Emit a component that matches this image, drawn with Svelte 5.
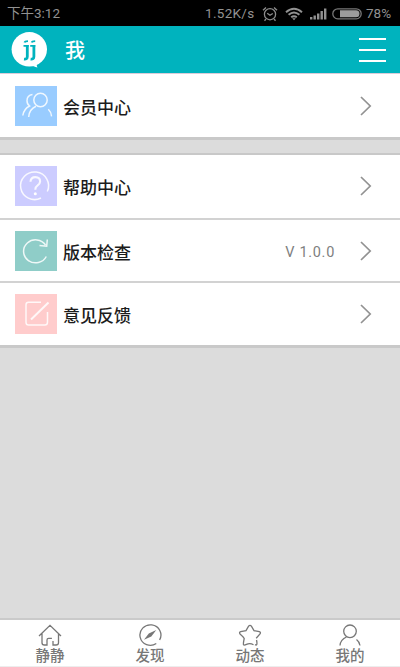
<script>
  const groups = [
    [{ icon: 'members', label: '会员中心', color: '#99ccff' }],
    [
      { icon: 'help', label: '帮助中心', color: '#ccccff' },
      { icon: 'refresh', label: '版本检查', color: '#8fcdc8', note: 'V 1.0.0' },
      { icon: 'edit', label: '意见反馈', color: '#ffcccc' }
    ]
  ];
  const tabs = [
    { icon: 'home', label: '静静' },
    { icon: 'compass', label: '发现' },
    { icon: 'star', label: '动态' },
    { icon: 'user', label: '我的' }
  ];
</script>

<div class="screen">
  <div class="status">
    <span class="time">下午3:12</span>
    <span class="speed">1.52K/s</span>
    <svg class="alarm" width="16" height="16" viewBox="0 0 16 16" fill="none" stroke="#8c8c8c" stroke-width="1.3">
      <circle cx="8" cy="8.2" r="5.6" />
      <path d="M1 4.2 4 1.4M15 4.2 12 1.4M5.2 7.2 8 9.3l2.8-1.8M4 13l-1.5 1.7M12 13l1.5 1.7" />
    </svg>
    <svg class="wifi" width="18" height="14" viewBox="0 0 18 14" fill="none" stroke="#929292" stroke-width="1.9">
      <path d="M1 5.2Q9-1.8 17 5.2M3.6 7.8Q9 3.2 14.4 7.8M6.2 10.3Q9 8 11.8 10.3" />
      <path d="M7.2 11.2h3.6L9 13.3z" fill="#929292" stroke="none" />
    </svg>
    <svg class="signal" width="17" height="12" viewBox="0 0 17 12" fill="#929292">
      <path d="M0 9h2.4v2.5H0zM3.5 7.5h2.4v4H3.5zM7 5.5h2.4v6H7zM10.5 3h2.4v8.5h-2.4zM14 .5h2.4v11H14z" />
    </svg>
    <svg class="battery" width="30" height="12" viewBox="0 0 30 12">
      <rect x=".8" y=".8" width="28.4" height="10" rx="5" fill="none" stroke="#777" stroke-width="1.3" />
      <path d="M8 2.3h16a3.5 3.5 0 0 1 0 7H8z" fill="#9c9c9c" />
    </svg>
    <span class="percent">78%</span>
  </div>

  <header>
    <svg class="logo" width="36" height="36" viewBox="0 0 36 36">
      <ellipse cx="18.3" cy="17.3" rx="17.7" ry="17.2" fill="#fff" />
      <path d="M18 33c4 .2 5.500 2 8.500 2.500-.8-1.300-.9-2.500-.5-4z" fill="#fff" />
      <g fill="none" stroke="#00b3be">
        <path d="M16.300 13v11.500q0 3-3.300 2.600M22.900 13v11.500q0 3-3.300 2.600" stroke-width="2.800" />
        <path d="M12.500 13.900h5.200M19.200 13.900h5.100" stroke-width="1.800" />
        <path d="M13.500 10.400q.3-1.200 3.500-1.300M20.700 10.400q.3-1.200 3.500-1.300" stroke-width="1.900" />
      </g>
    </svg>
    <h1>我</h1>
    <div class="menu"><i></i><i></i><i></i></div>
  </header>

  <main>
    {#each groups as group}
      <section>
        {#each group as row}
          <div class="row {row.icon}">
            <div class="tile" style="background:{row.color}">
              <svg width="42" height="40" viewBox="0 0 42 40" fill="none" stroke="#fff" stroke-opacity=".85" stroke-width="1.5">
                {#if row.icon === 'members'}
                  <circle cx="25.5" cy="14" r="6.7" />
                  <path d="M21 20.3q-6.800 3-7.300 10.700M33.300 23.300q2.700 2.500 3.300 7M17.500 8.500q-5.500.8-5.500 6.200 0 3.500 2.600 5.300-5.800 3-6.800 9.500" />
                {:else if row.icon === 'help'}
                  <path d="M32.3 25.5A14 13.8 0 1 0 26 32" />
                  <path d="M15.500 15.800q.2-4.700 4.900-4.700 4.700.1 4.700 4.300 0 2.400-2.700 4.200-2.100 1.300-2.100 4.200" stroke-width="2.1" />
                  <circle cx="20.3" cy="27.8" r="1.5" fill="#fff" stroke="none" />
                {:else if row.icon === 'refresh'}
                  <path d="M31.3 25.5A12 11.5 0 1 1 30.6 14M32.3 8.500l-.6 6.700-7.200-.7" />
                {:else}
                  <path d="M26 8.300H13.500q-2.500 0-2.500 2.500v17.500q0 2.800 2.500 2.800h16.300q2.700 0 2.700-2.800V18" />
                  <path d="M16 25.500 33.500 8.500" stroke-width="2" />
                {/if}
              </svg>
            </div>
            <span class="label">{row.label}</span>
            {#if row.note}<span class="note">{row.note}</span>{/if}
            <svg class="chevron" width="12" height="20" viewBox="0 0 12 20" fill="none" stroke="#929292" stroke-width="1.7">
              <path d="M1 1 10.200 10 1 19" />
            </svg>
          </div>
        {/each}
      </section>
    {/each}
  </main>

  <nav>
    {#each tabs as tab}
      <div class="tab">
        <svg width="24" height="23" viewBox="0 0 24 23" fill="none" stroke="#777" stroke-width="1.3">
          {#if tab.icon === 'home'}
            <path d="M1 12 12 1.300 23 12M4 9.500v9.200q0 2.300 2.300 2.300H9v-5q0-1.600 1.600-1.600h3.300M15 17v4h3q2.500 0 2.500-2.300V9.500" />
          {:else if tab.icon === 'compass'}
            <path d="M18.300 19.500A10.500 10.200 0 1 1 21.600 16" />
            <path d="M6 15.800 10.800 9.500 18.300 6 13.300 12.500z" fill="#777" stroke="none" />
          {:else if tab.icon === 'star'}
            <path d="M15.500 20.700Q12 18.800 8.500 20.300q-2.500 1.200-3 .3-.4-.7.7-6.100Q6 13.500 2 9.900.9 8.300 2.700 7.700L8 6.700l2.600-4.500q1.400-1.800 2.800 0L16 6.700l5.300 1q1.800.6.7 2.200l-3.800 4.300M18.500 16q.8 3.500.2 4.700-.4.600-1.700 0" />
          {:else}
            <circle cx="12" cy="7.3" r="6.3" />
            <path d="M8.500 13Q2.500 15.500 2 21.500M18.500 15.500q3 2.300 3.500 6" />
          {/if}
        </svg>
        <span>{tab.label}</span>
      </div>
    {/each}
  </nav>
</div>

<style>
  :global(body) { margin: 0; }
  .screen {
    width: 400px;
    height: 667px;
    display: flex;
    flex-direction: column;
    overflow: hidden;
    background: #dcdcdc;
    font-family: Roboto, "Noto Sans CJK SC", sans-serif;
  }
  .status {
    flex: none;
    height: 26px;
    box-sizing: border-box;
    padding: 1px 7px 0;
    display: flex;
    align-items: center;
    background: #000;
    color: #929292;
    font-size: 13.5px;
    line-height: 25px;
    white-space: nowrap;
  }
  .status svg { flex: none; }
  .time { width: 198px; flex: none; }
  .speed { width: 57px; flex: none; letter-spacing: .3px; }
  .wifi { margin-left: 7px; }
  .signal { margin-left: 7px; }
  .battery { margin-left: 5px; }
  .percent { margin-left: 4px; }
  header {
    flex: none;
    height: 48px;
    box-sizing: border-box;
    padding: 0 14px 0 11px;
    display: flex;
    align-items: center;
    background: #00b3be;
    border-bottom: 1px solid #d9ccd9;
  }
  h1 {
    margin: 3px 0 0 18px;
    font-size: 20px;
    line-height: 30px;
    font-weight: 500;
    color: #fff;
  }
  .menu {
    margin-left: auto;
    width: 27px;
    display: flex;
    flex-direction: column;
    gap: 9px;
  }
  .menu i { height: 2px; background: #fff; }
  section {
    background: #fff;
    border-bottom: 3px solid #c9c9c9;
  }
  section + section {
    margin-top: 13px;
    border-top: 2px solid #c8c8c8;
  }
  .row {
    height: 63px;
    box-sizing: border-box;
    padding: 0 28px 0 15px;
    display: flex;
    align-items: center;
  }
  .row.help { padding-bottom: 1px; }
  .row + .row { border-top: 2px solid #d2d2d2; }
  .row.edit { height: 64px; }
  .tile { width: 42px; height: 40px; flex: none; }
  .tile svg { display: block; }
  .label {
    margin: 4px 0 0 6px;
    font-size: 17px;
    font-weight: 500;
    line-height: 24px;
    color: #1c1c1c;
  }
  .note {
    margin-left: auto;
    margin-top: 3px;
    font-size: 14.5px;
    letter-spacing: .7px;
    color: #808080;
  }
  .chevron { margin-left: auto; flex: none; }
  .note + .chevron { margin-left: 25px; }
  nav {
    margin-top: auto;
    height: 49px;
    box-sizing: border-box;
    border-top: 2px solid #cacaca;
    border-bottom: 1px solid #ededed;
    display: flex;
    background: #fff;
  }
  .tab {
    flex: 1;
    display: flex;
    flex-direction: column;
    align-items: center;
    padding-top: 4px;
    color: #777;
    font-size: 14.5px;
    font-weight: 500;
    line-height: 20px;
  }
  .tab svg { display: block; flex: none; }
</style>
